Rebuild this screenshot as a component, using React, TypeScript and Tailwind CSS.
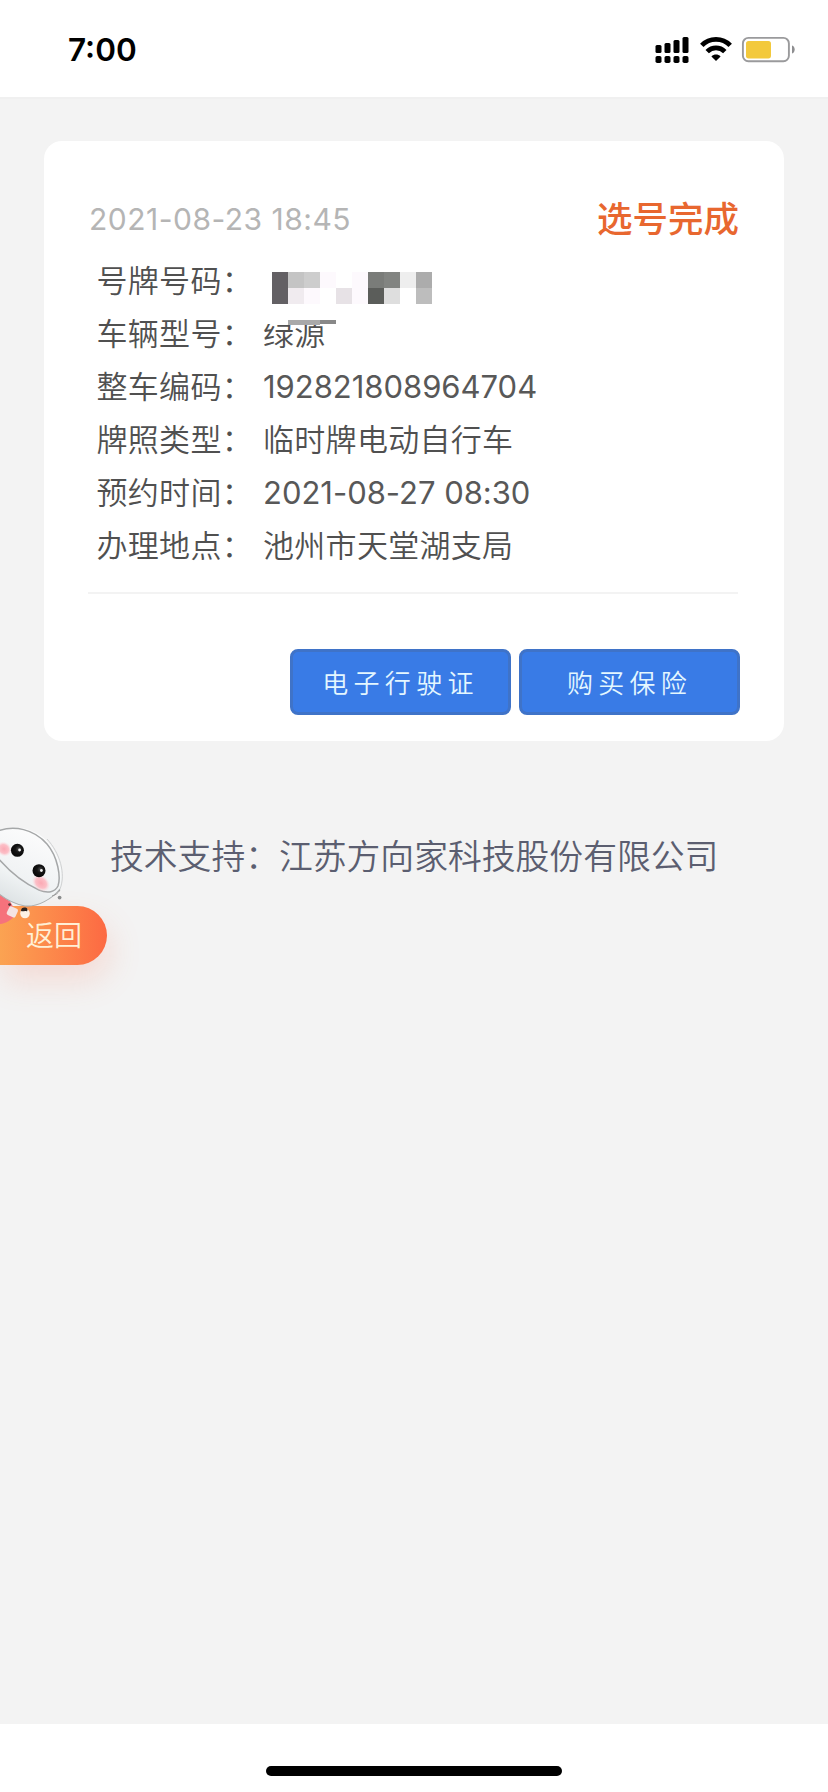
import clsx from "clsx";

type Row = {
  label: string;
  value?: string;
};

const rows: Row[] = [
  { label: "号牌号码：" },
  { label: "车辆型号：", value: "绿源" },
  { label: "整车编码：", value: "192821808964704" },
  { label: "牌照类型：", value: "临时牌电动自行车" },
  { label: "预约时间：", value: "2021-08-27 08:30" },
  { label: "办理地点：", value: "池州市天堂湖支局" },
];

const mosaic = [
  "bg-[#636064]",
  "bg-[#c4c4c4]",
  "bg-[#cdcdcd]",
  "bg-[#fdf9fd]",
  "bg-white",
  "bg-[#fdf9fd]",
  "bg-[#7a7c79]",
  "bg-[#828481]",
  "bg-[#eeeeee]",
  "bg-[#acacac]",
  "bg-[#636064]",
  "bg-[#f0ebef]",
  "bg-[#fdf9fd]",
  "bg-white",
  "bg-[#e7e2e6]",
  "bg-[#fdf9fd]",
  "bg-[#5b5d5a]",
  "bg-[#dedede]",
  "bg-white",
  "bg-[#bdbdbd]",
];

function StatusBar() {
  return (
    <header className="flex h-[97px] items-start justify-between bg-white pl-[68px] pr-[33px]">
      <span className="mt-[29px] text-[31.5px] leading-[42px] font-semibold text-black">
        7:00
      </span>
      <div className="mt-[36px] flex items-start">
        <svg width="34" height="28" viewBox="0 0 34 28" fill="#000">
          <rect x="0.5" y="9" width="6" height="8" rx="1.5" />
          <rect x="9.5" y="7" width="6" height="10" rx="1.5" />
          <rect x="18.5" y="4" width="6" height="13" rx="1.5" />
          <rect x="27.5" y="1" width="6" height="16" rx="1.5" />
          <rect x="0.5" y="20" width="6" height="7" rx="1.8" />
          <rect x="9.5" y="20" width="6" height="7" rx="1.8" />
          <rect x="18.5" y="20" width="6" height="7" rx="1.8" />
          <rect x="27.5" y="20" width="6" height="7" rx="1.8" />
        </svg>
        <svg
          className="ml-[11px]"
          width="32"
          height="28"
          viewBox="0 0 32 28"
          fill="none"
          stroke="#000"
          strokeWidth="4.8"
        >
          <path d="M1.8 9.4C9.5 1.4 22.5 1.4 30.2 9.4" />
          <path d="M7.2 15.6C12.2 10.6 19.8 10.6 24.8 15.6" />
          <path
            d="M11.4 20.4C14 17.8 18 17.8 20.6 20.4L16 25Z"
            fill="#000"
            stroke="none"
          />
        </svg>
        <svg
          className="ml-[9px]"
          width="54"
          height="28"
          viewBox="0 0 54 28"
          fill="none"
        >
          <rect
            x="1.9"
            y="1.9"
            width="46"
            height="23.4"
            rx="5.5"
            stroke="#9a9a9c"
            strokeWidth="1.9"
          />
          <rect x="5" y="5" width="25" height="17.4" rx="2.6" fill="#f3c93c" />
          <path d="M51 9.6C54.6 10.6 54.6 16.6 51 17.6Z" fill="#8e8e90" />
        </svg>
      </div>
    </header>
  );
}

function Plate() {
  return (
    <div className="ml-[9px] mt-[18px] grid h-8 w-[160px] grid-cols-10">
      {mosaic.map((color, i) => (
        <span key={i} className={clsx("h-4 w-4", color)} />
      ))}
    </div>
  );
}

function InfoRow({ label, value }: Row) {
  const isNumeric = !!value && /^[\d\s:-]+$/.test(value);

  return (
    <div className="relative flex h-[53px] text-[31px] leading-[53px] font-[350] tracking-[0.3px] text-[#505050]">
      <dt className="w-[167px] pl-[0.5px]">{label}</dt>
      <dd
        className={clsx(
          "flex",
          isNumeric && "font-normal tracking-[-0.02px] text-[#585858]",
        )}
      >
        {value ?? <Plate />}
      </dd>
      {value === "绿源" && (
        <div className="absolute left-[165px] top-[3px] flex h-[14px] w-[80px] items-end bg-white pl-[27px]">
          <span className="h-[5px] w-8 translate-y-px bg-[#a9a9a9]" />
          <span className="h-1 w-4 bg-[#888888]" />
        </div>
      )}
    </div>
  );
}

function ActionButton({ children }: { children: string }) {
  return (
    <button className="h-[66px] w-[221px] rounded-[8px] border-[3px] border-[#3f73c8] bg-[#397be6] pt-[3px] text-[26px] font-[350] tracking-[5.3px] text-[#e4f7ff]">
      {children}
    </button>
  );
}

function Mascot() {
  return (
    <svg
      className="absolute left-0 top-[-86px]"
      width="70"
      height="105"
      viewBox="0 0 70 105"
    >
      <defs>
        <linearGradient id="head" x1="0.7" y1="0" x2="0.3" y2="1">
          <stop offset="0" stopColor="#ffffff" />
          <stop offset="0.65" stopColor="#f1f4f5" />
          <stop offset="1" stopColor="#dde2e4" />
        </linearGradient>
        <linearGradient id="face" x1="0.7" y1="0" x2="0.3" y2="1">
          <stop offset="0" stopColor="#fdfdfd" />
          <stop offset="1" stopColor="#eceff1" />
        </linearGradient>
        <radialGradient id="blush">
          <stop offset="0" stopColor="#fba9b4" />
          <stop offset="0.6" stopColor="#fcbfc7" />
          <stop offset="1" stopColor="#fcdde1" stopOpacity="0" />
        </radialGradient>
        <radialGradient id="eye" cx="0.6" cy="0.4">
          <stop offset="0" stopColor="#4a4a4a" />
          <stop offset="0.5" stopColor="#151515" />
          <stop offset="1" stopColor="#0b0b0b" />
        </radialGradient>
      </defs>
      {/* body */}
      <path d="M-1 72C7 76 15 86 15 95C12 100 5 104 -1 104Z" fill="#f6727c" />
      {/* head */}
      <path
        d="M-2 12C12 4 32 7 46 20C59 33 65 54 60 69C52 79 38 87 25 86C14 84 5 79 -2 73Z"
        fill="url(#head)"
      />
      <path
        d="M60 69C52 79 38 87 25 86C14 84 5 79 -2 73"
        fill="none"
        stroke="#a9adae"
        strokeWidth="1.1"
      />
      {/* face plate */}
      <path
        d="M-2 11C14 5 34 9 47 24C58 37 61 57 58 66C55 72 48 74 39 70C26 64 10 52 -2 38Z"
        fill="url(#face)"
        stroke="#a5a7a8"
        strokeWidth="1.5"
      />
      <path
        d="M47 19C60 33 66 54 60 69"
        fill="none"
        stroke="#cfd1d2"
        strokeWidth="1"
      />
      <ellipse
        cx="4"
        cy="29"
        rx="8"
        ry="7"
        transform="rotate(40 4 29)"
        fill="url(#blush)"
      />
      <ellipse
        cx="41"
        cy="63"
        rx="10"
        ry="7.5"
        transform="rotate(40 41 63)"
        fill="url(#blush)"
      />
      <circle cx="17.4" cy="30.3" r="6.5" fill="url(#eye)" />
      <circle cx="39" cy="50.7" r="6.5" fill="url(#eye)" />
      <circle cx="19.6" cy="30" r="1.4" fill="#f4f4f4" />
      <circle cx="41.4" cy="50.5" r="1.4" fill="#f4f4f4" />
      {/* antenna */}
      <path d="M52 76C56 75 58 73 60 70" stroke="#999" fill="none" />
      <circle cx="59.6" cy="77.6" r="1.9" fill="#8b8d8e" />
      {/* hands */}
      <rect
        x="7.5"
        y="87"
        width="9.5"
        height="9.5"
        rx="2"
        transform="rotate(25 12 92)"
        fill="#f5e3e2"
      />
      <circle cx="9.6" cy="84.6" r="1.4" fill="#5a3535" />
      <circle cx="25" cy="93.5" r="4.8" fill="#fdf1e4" />
      <path
        d="M21 91C21 88 23 87 25.5 87.5C27.5 88 28 89.5 27 91.5C25 90 23 92 21 91Z"
        fill="#2e2420"
      />
    </svg>
  );
}

export default function App() {
  return (
    <div className="flex h-[1792px] w-[828px] flex-col bg-[#f3f3f3] font-['Inter','Noto_Sans_CJK_SC',sans-serif]">
      <StatusBar />
      <main className="flex-1 overflow-hidden border-t-2 border-[#f0f0f0]">
        <section className="mx-[44px] mt-[42px] h-[600px] rounded-[18px] bg-white pl-[44px] pr-[45px] pt-[51px]">
          <div className="flex h-[54px] items-center justify-between pl-px">
            <time className="text-[30px] tracking-[0.5px] text-[#b5b5b5]">
              2021-08-23 18:45
            </time>
            <strong className="pt-px text-[35.5px] font-medium text-[#e8672f]">
              选号完成
            </strong>
          </div>
          <dl className="ml-2 mt-[8px]">
            {rows.map((row) => (
              <InfoRow key={row.label} {...row} />
            ))}
          </dl>
          <div className="mr-px mt-[20px] h-[2px] bg-[#f3f3f3]" />
          <div className="-mr-[1px] mt-[55px] flex justify-end gap-2">
            <ActionButton>电子行驶证</ActionButton>
            <ActionButton>购买保险</ActionButton>
          </div>
        </section>
        <p className="mt-[90px] pl-[110px] text-[33.8px] leading-[52px] font-[350] text-[#5b5e70]">
          技术支持：江苏方向家科技股份有限公司
        </p>
        <div className="relative mt-[23px] h-[59px] w-[107px]">
          <button className="flex h-[59px] w-[107px] items-center rounded-r-full bg-gradient-to-r from-[#fba352] to-[#fc6943] pl-[26px] pt-px text-[28px] font-[350] text-[#fff0d6] shadow-[4px_16px_32px_rgba(250,110,80,0.18)]">
            返回
          </button>
          <Mascot />
        </div>
      </main>
      <footer className="flex h-[68px] justify-center bg-white pt-[42px]">
        <div className="h-[10px] w-[296px] rounded-full bg-black" />
      </footer>
    </div>
  );
}
